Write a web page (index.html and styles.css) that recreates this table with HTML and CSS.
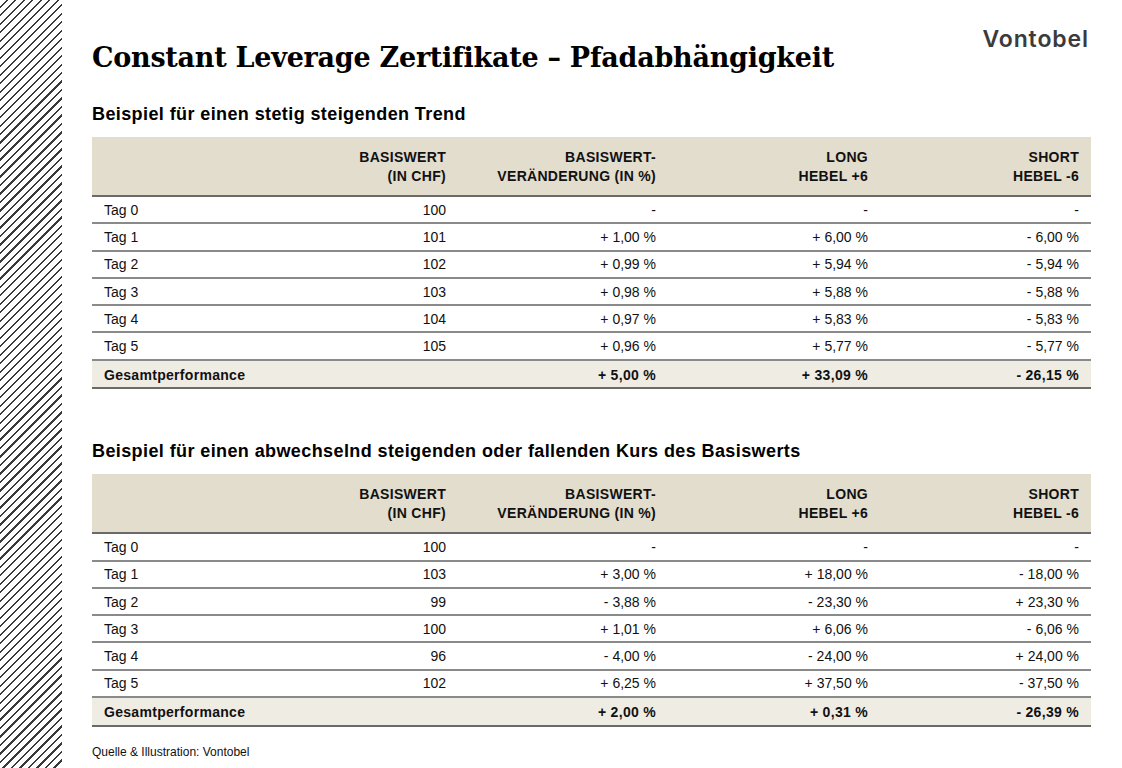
FILE: index.html
```html
<!DOCTYPE html>
<html lang="de">
<head>
<meta charset="utf-8">
<title>Constant Leverage Zertifikate</title>
<link rel="stylesheet" href="styles.css">
</head>
<body>
<div class="page">
  <div class="stripes"></div>
  <main class="content">
    <header class="top">
      <h1 class="title">Constant Leverage Zertifikate – Pfadabhängigkeit</h1>
      <div class="logo">Vontobel</div>
    </header>

    <section class="block">
      <h2 class="subtitle">Beispiel für einen stetig steigenden Trend</h2>
      <div class="table">
        <div class="row head">
          <div></div>
          <div>BASISWERT<br>(IN CHF)</div>
          <div>BASISWERT-<br>VERÄNDERUNG (IN %)</div>
          <div>LONG<br>HEBEL +6</div>
          <div>SHORT<br>HEBEL -6</div>
        </div>
        <div class="row"><div>Tag 0</div><div>100</div><div>-</div><div>-</div><div>-</div></div>
        <div class="row"><div>Tag 1</div><div>101</div><div>+ 1,00 %</div><div>+ 6,00 %</div><div>- 6,00 %</div></div>
        <div class="row"><div>Tag 2</div><div>102</div><div>+ 0,99 %</div><div>+ 5,94 %</div><div>- 5,94 %</div></div>
        <div class="row"><div>Tag 3</div><div>103</div><div>+ 0,98 %</div><div>+ 5,88 %</div><div>- 5,88 %</div></div>
        <div class="row"><div>Tag 4</div><div>104</div><div>+ 0,97 %</div><div>+ 5,83 %</div><div>- 5,83 %</div></div>
        <div class="row"><div>Tag 5</div><div>105</div><div>+ 0,96 %</div><div>+ 5,77 %</div><div>- 5,77 %</div></div>
        <div class="row total"><div>Gesamtperformance</div><div></div><div>+ 5,00 %</div><div>+ 33,09 %</div><div>- 26,15 %</div></div>
      </div>
    </section>

    <section class="block second">
      <h2 class="subtitle">Beispiel für einen abwechselnd steigenden oder fallenden Kurs des Basiswerts</h2>
      <div class="table">
        <div class="row head">
          <div></div>
          <div>BASISWERT<br>(IN CHF)</div>
          <div>BASISWERT-<br>VERÄNDERUNG (IN %)</div>
          <div>LONG<br>HEBEL +6</div>
          <div>SHORT<br>HEBEL -6</div>
        </div>
        <div class="row"><div>Tag 0</div><div>100</div><div>-</div><div>-</div><div>-</div></div>
        <div class="row"><div>Tag 1</div><div>103</div><div>+ 3,00 %</div><div>+ 18,00 %</div><div>- 18,00 %</div></div>
        <div class="row"><div>Tag 2</div><div>99</div><div>- 3,88 %</div><div>- 23,30 %</div><div>+ 23,30 %</div></div>
        <div class="row"><div>Tag 3</div><div>100</div><div>+ 1,01 %</div><div>+ 6,06 %</div><div>- 6,06 %</div></div>
        <div class="row"><div>Tag 4</div><div>96</div><div>- 4,00 %</div><div>- 24,00 %</div><div>+ 24,00 %</div></div>
        <div class="row"><div>Tag 5</div><div>102</div><div>+ 6,25 %</div><div>+ 37,50 %</div><div>- 37,50 %</div></div>
        <div class="row total"><div>Gesamtperformance</div><div></div><div>+ 2,00 %</div><div>+ 0,31 %</div><div>- 26,39 %</div></div>
      </div>
    </section>

    <footer class="source">Quelle &amp; Illustration: Vontobel</footer>
  </main>
</div>
</body>
</html>
```

FILE: styles.css
```css
* { box-sizing: border-box; }
html, body { margin: 0; padding: 0; background: #ffffff; }
body { font-family: "Liberation Sans", Arial, sans-serif; color: #111111; }

.page {
  display: flex;
  width: 1122px;
  height: 768px;
  overflow: hidden;
}

.stripes {
  flex: 0 0 62px;
  height: 768px;
  background: repeating-linear-gradient(
    135deg,
    #ffffff 0px,
    #ffffff 4.4px,
    #3a3a3a 4.4px,
    #3a3a3a 6px
  );
}

.content {
  flex: 0 0 999px;
  margin-left: 30px;
  display: flex;
  flex-direction: column;
}

.top {
  display: flex;
  justify-content: space-between;
  align-items: flex-start;
  padding-top: 38px;
  height: 96px;
}

.title {
  margin: 0;
  font-family: "DejaVu Serif", "Liberation Serif", serif;
  font-weight: bold;
  font-size: 27px;
  line-height: 44px;
  color: #000000;
  margin-top: -2px;
  letter-spacing: -0.25px;
}

.logo {
  font-family: "Inter", "Open Sans", sans-serif;
  font-weight: 600;
  font-size: 23px;
  line-height: 24px;
  color: #3b3b3b;
  margin-top: -11px;
  margin-right: 2px;
  letter-spacing: 0.9px;
}

.subtitle {
  margin: 0;
  font-size: 18px;
  font-weight: bold;
  letter-spacing: 0.4px;
  line-height: 20px;
  height: 41px;
  padding-top: 8px;
  color: #000000;
}

.table {
  display: flex;
  flex-direction: column;
}

.row {
  display: grid;
  grid-template-columns: 156px 210px 210px 212px 211px;
  height: 27.3px;
  align-items: center;
  border-bottom: 2px solid #8a8a8a;
  font-size: 14px;
  line-height: 16px;
}

.row > div { text-align: right; padding-right: 12px; white-space: nowrap; }
.row > div:first-child { text-align: left; padding-left: 12px; padding-right: 0; }

.row.head {
  height: 60px;
  background: #e2ddcd;
  font-weight: bold;
  font-size: 14px;
  letter-spacing: 0.3px;
  line-height: 19px;
  border-bottom: 2px solid #6a6a6a;
  padding-top: 1px;
}

.row.total {
  height: 28.5px;
  padding-top: 2px;
  background: #efece4;
  font-weight: bold;
  font-size: 14px;
  letter-spacing: 0.3px;
  border-bottom: 2px solid #6a6a6a;
}

.second { margin-top: 44px; }

.source {
  margin-top: 18px;
  font-size: 12px;
  line-height: 14px;
  color: #111111;
}
```
